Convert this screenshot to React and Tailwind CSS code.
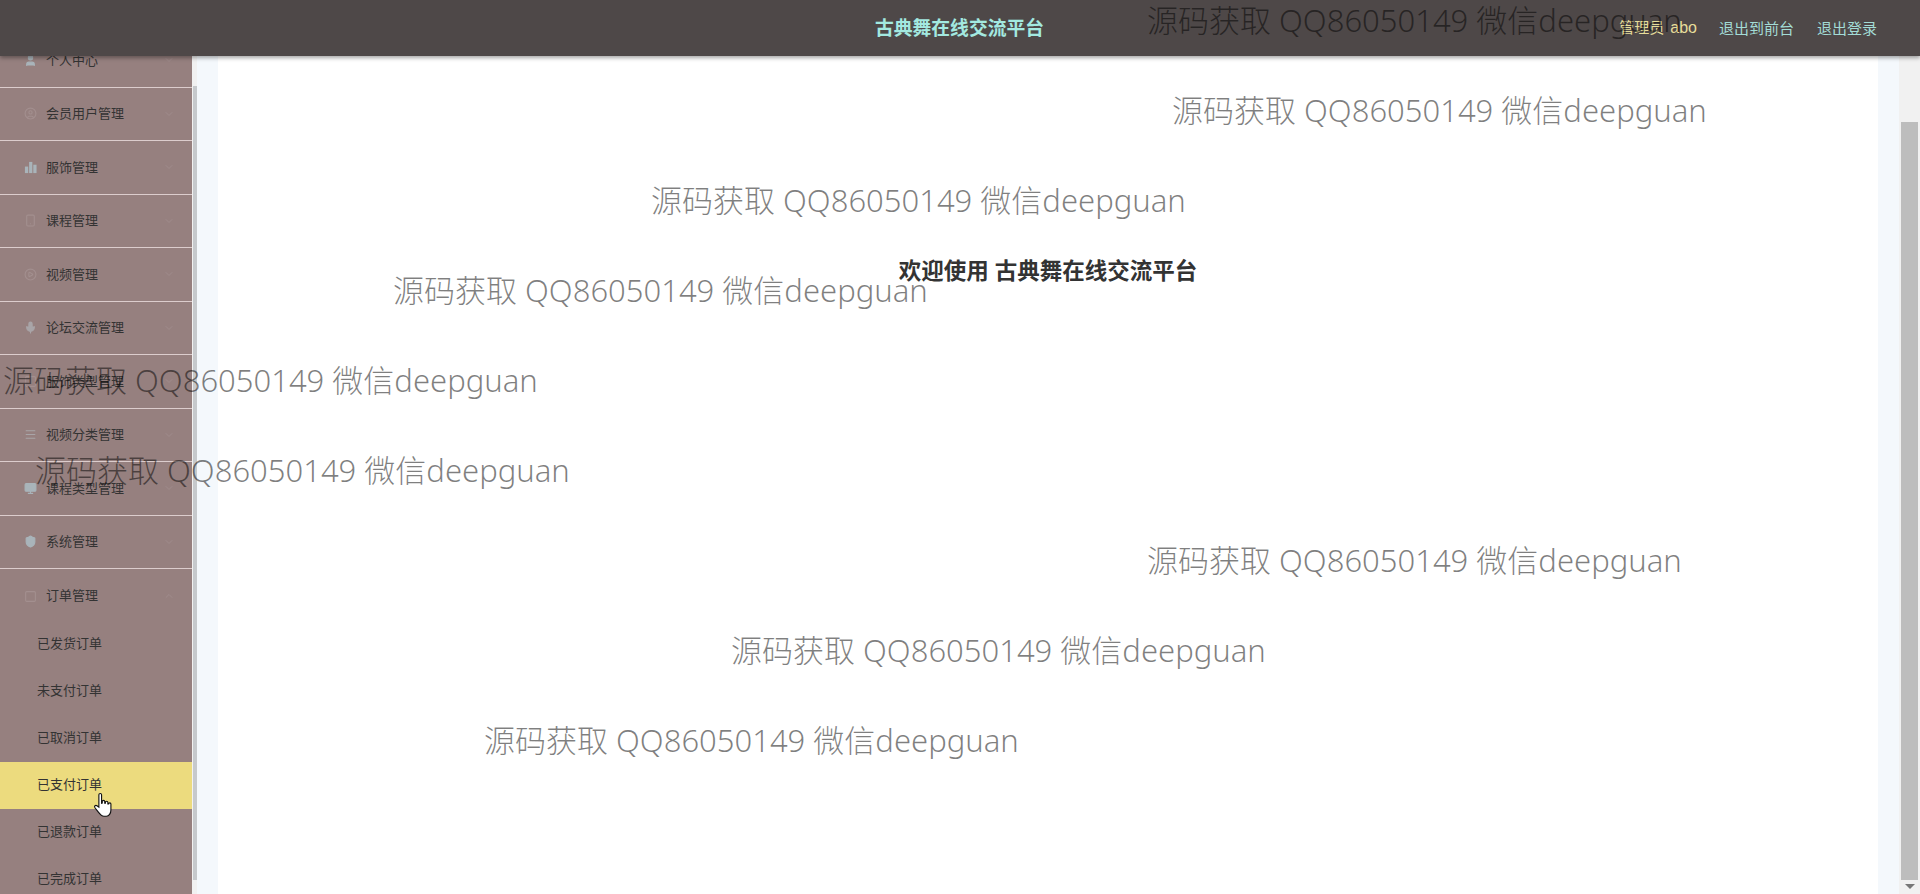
import { ChevronDown, ChevronUp, CircleUser, Menu, Mic, Monitor, PlayCircle, Shield, Smartphone, Square, User } from 'lucide-react'

function Bars({ size, className }) {
  return (
    <svg width={size} height={size} viewBox="0 0 14 14" fill="currentColor" className={className}>
      <rect x="1" y="6" width="3.500" height="7" />
      <rect x="5.500" y="1" width="3.500" height="12" />
      <rect x="10" y="4" width="3.500" height="9" />
    </svg>
  )
}

const menus = [
  { name: '个人中心', icon: User, color: 'text-[#a9b4ba]', solid: true },
  { name: '会员用户管理', icon: CircleUser, color: 'text-[#a38f8f]' },
  { name: '服饰管理', icon: Bars, color: 'text-[#a9b4ba]', solid: true },
  { name: '课程管理', icon: Smartphone, color: 'text-[#a38f8f]' },
  { name: '视频管理', icon: PlayCircle, color: 'text-[#a38f8f]' },
  { name: '论坛交流管理', icon: Mic, color: 'text-[#a9a5a8]', solid: true },
  { name: '服饰类型管理', icon: Square, color: 'text-[#a38f8f]' },
  { name: '视频分类管理', icon: Menu, color: 'text-[#a9a5a8]' },
  { name: '课程类型管理', icon: Monitor, color: 'text-[#a9b4ba]', solid: true },
  { name: '系统管理', icon: Shield, color: 'text-[#a9b4ba]', solid: true },
]

const orders = ['已发货订单', '未支付订单', '已取消订单', '已支付订单', '已退款订单', '已完成订单']

const marks = [
  'left-[1147px] top-[-1px]',
  'left-[1172px] top-[89px]',
  'left-[651px] top-[179px]',
  'left-[393px] top-[269px]',
  'left-[3px] top-[359px]',
  'left-[35px] top-[449px]',
  'left-[1147px] top-[539px]',
  'left-[731px] top-[629px]',
  'left-[484px] top-[719px]',
]

function MenuRow({ item }) {
  const Icon = item.icon
  return (
    <div className="flex h-[53.5px] items-center border-b border-[#dccdcd] pl-[24px] pr-[17px]">
      <Icon size={13} className={item.color} fill={item.solid ? 'currentColor' : 'none'} />
      <span className="ml-[9px] flex-1 text-[13px] text-[#333]">{item.name}</span>
      <ChevronDown size={12} className="text-[#a08c8c]" />
    </div>
  )
}

export default function App() {
  return (
    <div className="relative flex h-[894px] overflow-hidden bg-white font-['Noto_Sans','Noto_Sans_CJK_SC',sans-serif]">
      <aside className="h-full w-[192px] shrink-0 bg-[#96807f] pt-[34px]">
        {menus.map((m) => (
          <MenuRow key={m.name} item={m} />
        ))}
        <div className="flex h-[52px] items-center pl-[24px] pr-[17px] pt-[2px]">
          <Square size={13} className="text-[#a38f8f]" />
          <span className="ml-[9px] flex-1 text-[13px] text-[#333]">订单管理</span>
          <ChevronUp size={12} className="text-[#a08c8c]" />
        </div>
        {orders.map((o) => (
          <div
            key={o}
            className={`flex h-[47px] items-center pb-[2px] pl-[37px] text-[13px] text-[#333] ${o === '已支付订单' ? 'bg-[#ecdb7e]' : ''}`}
          >
            {o}
          </div>
        ))}
      </aside>

      <div className="flex w-[5px] shrink-0 flex-col bg-[#f1f1f1] pt-[86px]">
        <div className="ml-[1px] h-[794px] w-[4px] bg-[#c6c9cc]" />
      </div>

      <main className="flex flex-1 justify-center border-x-[21px] border-[#f4f8fc] bg-white pt-[255px]">
        <h1 className="h-[32px] text-[22.5px] font-bold leading-[32px] text-[#333]">欢迎使用 古典舞在线交流平台</h1>
      </main>

      <div className="flex w-[21px] shrink-0 flex-col bg-[#f1f1f1] pl-[2px] pt-[122px]">
        <div className="h-[758px] w-[17px] bg-[#bdbdbd]" />
        <div className="ml-[4px] mt-[4px] h-0 w-0 border-x-[5px] border-t-[5px] border-x-transparent border-t-[#777]" />
      </div>

      <header className="absolute left-0 top-0 flex h-[56px] w-full items-center bg-[#4e4848] shadow-[0_2px_4px_rgba(0,0,0,0.35)]">
        <div className="ml-[875px] text-[18.8px] font-bold text-[#a3e9e0]">古典舞在线交流平台</div>
        <div className="ml-auto mr-[43px] flex items-center text-[15px]">
          <span className="text-[#e7dd9a]">
            管理员 <span className="ml-[2px] font-['Liberation_Sans',sans-serif] text-[16px]">abo</span>
          </span>
          <a className="ml-[22px] text-[#a3dcd6]">退出到前台</a>
          <a className="ml-[23px] text-[#a3dcd6]">退出登录</a>
        </div>
      </header>

      {marks.map((pos, i) => (
        <div
          key={i}
          className={`pointer-events-none absolute ${pos} whitespace-nowrap text-[31px] font-light leading-[42px] text-black/50`}
        >
          源码获取 QQ86050149 微信deepguan
        </div>
      ))}

      {/* mouse pointer over 已支付订单 */}
      <svg className="absolute left-[93px] top-[792px]" width="23" height="27" viewBox="0 0 20 24">
        <path
          d="M5 2.5c0-1.6 2.400-1.600 2.400 0V10l.6-.2V8.500c0-1.400 2.200-1.400 2.200 0V10l.6 0V9.300c0-1.400 2.200-1.400 2.200 0v1.300l.6 0c0-1.300 2.100-1.300 2.100 0V16c0 3-1.800 5.500-4 5.500H9.500C7 21.500 5.500 19 3.500 16.500L1.500 14c-1-1.300.5-2.800 1.800-1.800L5 13.500z"
          fill="#fff"
          stroke="#111"
          strokeWidth="1"
        />
      </svg>
    </div>
  )
}
